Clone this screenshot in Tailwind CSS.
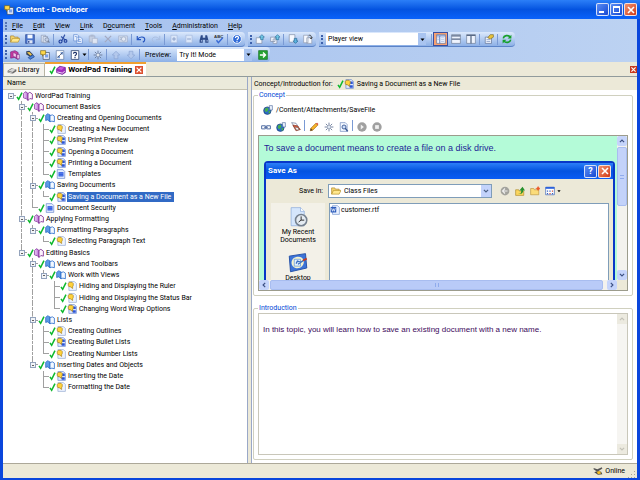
<!DOCTYPE html>
<html lang="en">
<head>
  <meta charset="UTF-8" />
  <meta name="viewport" content="width=device-width, initial-scale=1.0" />
  <title>Content - Developer</title>
  <script src="https://cdn.jsdelivr.net/npm/@tailwindcss/browser@4"></script>
</head>
<body class="h-screen overflow-hidden flex flex-col bg-[#0a46dc] font-[Roboto,'Liberation_Sans',sans-serif] text-[7px] leading-[10px] text-black">

  <!-- Icon sprite -->
  <svg class="hidden">
    <symbol id="app" viewBox="0 0 16 16"><path d="M5 4h10v11H5z" fill="#e8eefc" stroke="#345"/><path d="M8 7h5v5H8z" fill="#7aa0e8"/><path d="M1 1h8v6H6l-2 3V7H1z" fill="#ffd84a" stroke="#7a6412"/></symbol>
    <symbol id="check" viewBox="0 0 8 12"><path d="M1 7l2 3 4-8" fill="none" stroke="#0db82c" stroke-width="1.800"/></symbol>
    <symbol id="module" viewBox="0 0 16 16"><path d="M1 4l3-3 4 3v11l-3-3-4-1z" fill="#c88ae0" stroke="#7d2a93" stroke-width="1.200"/><path d="M8 4l3-2 4 3v8l-4-1-3 3z" fill="#fdf2fd" stroke="#7d2a93" stroke-width="1.300"/><path d="M3 3v8" stroke="#f6e0fa" stroke-width="1.500"/></symbol>
    <symbol id="section" viewBox="0 0 16 16"><path d="M1 4l3-3 4 2v11l-4-3-3 1z" fill="#5c9ae6" stroke="#1b5cb8"/><path d="M8 4l4-1 3 2v9l-4-1-3 1z" fill="#f4f9ff" stroke="#2a6ccc" stroke-width="1.3"/></symbol>
    <symbol id="topic" viewBox="0 0 16 16"><path d="M3 1h9l3 3v11H3z" fill="#eef4ff" stroke="#8aa2cc"/><path d="M2 4l2-2h4l2 2v3L9 9v3L5 9H3L2 7z" fill="#ffd23c" stroke="#a07810"/></symbol>
    <symbol id="topicsim" viewBox="0 0 16 16"><path d="M3 1h9l3 3v11H3z" fill="#dfe9ff" stroke="#5a7cc8"/><path d="M10 4h4v4h-4zM9 10h5v4H9z" fill="#2b55d8"/><path d="M2 4l2-2h4l2 2v3L9 9v3L5 9H3L2 7z" fill="#ffd23c" stroke="#8a6a18"/></symbol>
    <symbol id="page" viewBox="0 0 16 16"><path d="M2 1h9l3 3v11H2z" fill="#e4edff" stroke="#5a7cc8"/><path d="M4 5h8v7H4z" fill="#2f5be0"/><path d="M4 7h8M4 10h8" stroke="#86a4f4" stroke-width=".7"/></symbol>
    <symbol id="open" viewBox="0 0 16 16"><path d="M1 13V3h5l1 2h6v3" fill="#f7d873" stroke="#a87c18"/><path d="M1 13l3-6h12l-3 6z" fill="#ffe88e" stroke="#b08a20"/></symbol>
    <symbol id="save" viewBox="0 0 16 16"><path d="M1 1h14v14H1z" fill="#4a74cc" stroke="#243f8c"/><path d="M4 1h8v6H4z" fill="#f4f8ff"/><path d="M4 10h8v5H4z" fill="#dfe6f4"/><path d="M5 11h2v3H5z" fill="#243f8c"/></symbol>
    <symbol id="publish" viewBox="0 0 16 16"><path d="M2 2h7v11H2z" fill="#e5ecf8" stroke="#8592ae"/><path d="M5 4h7v10H5z" fill="#d4deef" stroke="#8592ae"/><circle cx="11" cy="9" r="3" fill="#c2cfe6" stroke="#74809a"/><path d="M13 11l2 3" stroke="#74809a" stroke-width="2"/></symbol>
    <symbol id="cut" viewBox="0 0 16 16"><path d="M11 1L6 11M5 4l7 6" stroke="#3554a8" stroke-width="1.8"/><circle cx="4" cy="12" r="2.4" fill="none" stroke="#1f3f9c" stroke-width="1.8"/><circle cx="12" cy="11" r="2.2" fill="none" stroke="#1f3f9c" stroke-width="1.8"/></symbol>
    <symbol id="copy" viewBox="0 0 16 16"><path d="M1 1h6l2 2v8H1zM6 5h6l3 3v7H6z" fill="#e9f1ff" stroke="#5a86d0"/><path d="M8 9h4M8 12h5M3 4h3" stroke="#5a86d0"/></symbol>
    <symbol id="paste" viewBox="0 0 16 16"><path d="M2 3h9v10H2z" fill="#c5cfe2" stroke="#9ba8c4"/><path d="M4 1h5v3H4z" fill="#adb9d0"/><path d="M7 7h8v8H7z" fill="#dfe6f3" stroke="#a5b1ca"/></symbol>
    <symbol id="delete" viewBox="0 0 16 16"><path d="M3 3l10 10M13 3L3 13" stroke="#a3a9c2" stroke-width="2"/></symbol>
    <symbol id="props" viewBox="0 0 16 16"><path d="M1 3h14v10H1z" fill="#d3dded" stroke="#9eadc8"/><circle cx="9" cy="8" r="3.5" fill="#e4eaf5" stroke="#91a1be"/><path d="M3 6h3M3 9h2" stroke="#91a1be"/></symbol>
    <symbol id="undo" viewBox="0 0 16 16"><path d="M2 3v6h6" fill="none" stroke="#2454c0" stroke-width="1.8"/><path d="M2 9c4-6 12-5 12 0 0 2-1 3-3 4" fill="none" stroke="#2454c0" stroke-width="1.8"/></symbol>
    <symbol id="redo" viewBox="0 0 16 16"><path d="M14 3v6H8M14 9C10 3 2 4 2 9c0 2 1 3 3 4" fill="none" stroke="#a9bcdf" stroke-width="1.5"/></symbol>
    <symbol id="plus" viewBox="0 0 16 16"><path d="M3 2h10v12H3z" fill="#dae6f9" stroke="#a2b6da"/><path d="M5 8h6M8 5v6" stroke="#8398c2" stroke-width="1.4"/></symbol>
    <symbol id="minus" viewBox="0 0 16 16"><path d="M3 2h10v12H3z" fill="#dae6f9" stroke="#a2b6da"/><path d="M5 8h6" stroke="#8398c2" stroke-width="1.4"/></symbol>
    <symbol id="find" viewBox="0 0 16 16"><path d="M3 2h3v4h4V2h3l2 8v4h-5v-5H6v5H1v-4z" fill="#2e4b88"/><path d="M3 10h2v2H3zM12 10h2v2h-2z" fill="#b6c8ec"/></symbol>
    <symbol id="spell" viewBox="0 0 16 16"><text x="0" y="6" font-size="7" font-weight="bold" fill="#333" font-family="Liberation Sans">ABC</text><path d="M4 10l3 4 7-8" fill="none" stroke="#3668d4" stroke-width="2.2"/></symbol>
    <symbol id="help" viewBox="0 0 16 16"><circle cx="8" cy="8" r="7" fill="#2f6ad8" stroke="#e4edfb" stroke-width="1.6"/><path d="M5.500 6.500c0-4 5-3 5-.5 0 2-2.500 2-2.500 4M8 11v2" fill="none" stroke="#fff" stroke-width="1.8"/></symbol>
    <symbol id="checkin" viewBox="0 0 16 16"><path d="M2 6h9v9H2z" fill="#f6f9ff" stroke="#7a869e"/><path d="M11 1l4 4h-2v4H9V5H7z" fill="#6fc6e4" stroke="#256a94"/></symbol>
    <symbol id="checkinall" viewBox="0 0 16 16"><path d="M1 5h7v7H1zM5 8h6v7H5z" fill="#f0f5ff" stroke="#7a869e"/><path d="M12 1l4 4h-2v4h-4V5H8z" fill="#6fc6e4" stroke="#256a94"/></symbol>
    <symbol id="checkout" viewBox="0 0 16 16"><path d="M2 1h9v12H2z" fill="#f6f9ff" stroke="#7a869e"/><path d="M12 15l-4-4h2V7h4v4h2z" fill="#5cb4e0" stroke="#20628e"/></symbol>
    <symbol id="cancelout" viewBox="0 0 16 16"><path d="M1 2h7v12H1zM6 6h8v9H6z" fill="#f6f9ff" stroke="#8a94a8"/><path d="M9 2c4-1 5 2 4 5M11 6l2 2 2-3" fill="none" stroke="#3a3a3a" stroke-width="1.3"/></symbol>
    <symbol id="v1" viewBox="0 0 16 16"><path d="M1 1h14v14H1z" fill="#f0f5ff" stroke="#5b6f97"/><path d="M1 3h14M6 3v12" stroke="#5b7cc0" stroke-width="1.5"/><path d="M2 6h3M2 9h3M8 6h5M8 9h5M8 12h5" stroke="#9db4e0"/></symbol>
    <symbol id="v2" viewBox="0 0 16 16"><path d="M1 1h14v14H1z" fill="#eef3fd" stroke="#67768f"/><path d="M1 3h14M1 8h14" stroke="#596a86" stroke-width="2"/></symbol>
    <symbol id="v3" viewBox="0 0 16 16"><path d="M1 1h14v14H1z" fill="#eef3fd" stroke="#67768f"/><path d="M1 2h14M8 2v13" stroke="#596a86" stroke-width="2"/></symbol>
    <symbol id="hand" viewBox="0 0 16 16"><path d="M2 5h10v10H2z" fill="#eef3fd" stroke="#56678a"/><path d="M4 9h6M4 12h6" stroke="#6d83b5"/><path d="M6 6l4-5h5v4l-5 3z" fill="#e8c23c" stroke="#7a6820"/></symbol>
    <symbol id="refresh" viewBox="0 0 16 16"><path d="M2 7c1-5 8-6 11-2M14 9c-1 5-8 6-11 2" fill="none" stroke="#17a02c" stroke-width="2.6"/><path d="M15 1v6H9zM1 15V9h6z" fill="#17a02c"/></symbol>
    <symbol id="newmod" viewBox="0 0 16 16"><path d="M1 3l7-2 5 3v11l-6-3-6 1z" fill="#c93aa0" stroke="#6f1a78"/><path d="M5 4l5 2v6l-5-2zM11 7h4v7h-4z" fill="#f4c5ea" stroke="#6f1a78" stroke-width=".8"/></symbol>
    <symbol id="purplebook" viewBox="0 0 16 16"><path d="M1 6l5-4 9 2v8l-5 3-9-3z" fill="#a32cc0" stroke="#5c1480"/><path d="M3 6l4-3 6 1-4 4z" fill="#c95ae0"/><path d="M2 11l8 2 4-3" fill="none" stroke="#fff" stroke-width="1.300"/></symbol>
    <symbol id="newsec" viewBox="0 0 16 16"><path d="M2 2l5-1 6 6-4 4-7-4z" fill="#33435e"/><path d="M3 4l4-1 4 4-2 2z" fill="#f3c84a"/><path d="M5 12l8-4 2 3-7 4z" fill="#4a83dc" stroke="#1d3d7c"/></symbol>
    <symbol id="newpage" viewBox="0 0 16 16"><path d="M2 1h12v14H2z" fill="#fff" stroke="#55709c"/><path d="M9 3h4v4H9zM4 9h4v4H4z" fill="#7aa0dc"/><path d="M4 12l8-8" stroke="#445" stroke-width="1.2"/></symbol>
    <symbol id="question" viewBox="0 0 16 16"><path d="M2 1h12v14H2z" fill="#fff" stroke="#3d517c" stroke-width="1.4"/><path d="M5.500 6c0-3 5-3 5 0 0 2-2.500 2-2.500 4M8 11v2" fill="none" stroke="#1b2f68" stroke-width="1.8"/></symbol>
    <symbol id="burst" viewBox="0 0 16 16"><path d="M8 1v4M8 11v4M1 8h4M11 8h4M3 3l3 3M10 10l3 3M13 3l-3 3M6 10l-3 3" stroke="#6d7d9b" stroke-width="1.5"/><circle cx="8" cy="8" r="2.500" fill="#eef3fb" stroke="#7f8da8"/></symbol>
    <symbol id="up" viewBox="0 0 16 16"><path d="M8 2l6 6h-3v6H5V8H2z" fill="#b3c8ec" stroke="#86a0d0"/></symbol>
    <symbol id="down" viewBox="0 0 16 16"><path d="M8 14l6-6h-3V2H5v6H2z" fill="#b3c8ec" stroke="#86a0d0"/></symbol>
    <symbol id="go" viewBox="0 0 16 16"><path d="M1 1h14v14H1z" fill="#26a232" stroke="#0f6c1c"/><path d="M3 8h8M8 4l4 4-4 4" fill="none" stroke="#fff" stroke-width="2.2"/></symbol>
    <symbol id="library" viewBox="0 0 16 16"><path d="M1 9l6-4 8 2v3l-6 4-8-2z" fill="#6c6c6c"/><path d="M2 9l6-3 6 1-5 4z" fill="#d8d8d8"/><path d="M2 11l7 2" stroke="#fff"/></symbol>
    <symbol id="globe" viewBox="0 0 16 16"><circle cx="7" cy="9" r="6" fill="#2d6cc8" stroke="#16386e"/><path d="M3 6l4-2 2 3-3 4-3-1zM9 10l3-1-1 4-2 1z" fill="#49b04c"/><path d="M10 1h5v7h-4z" fill="#eef4ff" stroke="#4b689c"/></symbol>
    <symbol id="link" viewBox="0 0 16 16"><path d="M1 6h6v5H1zM9 6h6v5H9z" fill="none" stroke="#5570a4" stroke-width="1.6"/><path d="M5 8.500h6" stroke="#5570a4" stroke-width="1.5"/></symbol>
    <symbol id="unlink" viewBox="0 0 16 16"><path d="M1 1l7 1 4 6-6 1z" fill="#fff" stroke="#55678a"/><path d="M3 5l7 1 5 6-7 2z" fill="#e05a38" stroke="#7c2a18"/><path d="M6 8l5 1 2 3-4 1z" fill="#f6f6f6" stroke="#555" stroke-width=".800"/></symbol>
    <symbol id="pencil" viewBox="0 0 16 16"><path d="M2 14l1-4 8-8 3 3-8 8z" fill="#f7b52a" stroke="#9c5f10"/><path d="M2 14l1-4 3 3z" fill="#543"/><path d="M11 2l3 3 1-2-2-2z" fill="#d8503c"/></symbol>
    <symbol id="preview" viewBox="0 0 16 16"><path d="M2 1h8l3 3v11H2z" fill="#f4f8ff" stroke="#6480b8"/><circle cx="8" cy="8" r="3.200" fill="#cfe0fa" stroke="#345490" stroke-width="1.4"/><path d="M10 10l4 5" stroke="#345490" stroke-width="2.200"/></symbol>
    <symbol id="play" viewBox="0 0 16 16"><circle cx="8" cy="8" r="7.500" fill="#a0a0a0"/><path d="M6 4l5 4-5 4z" fill="#f0f0f0"/></symbol>
    <symbol id="stop" viewBox="0 0 16 16"><circle cx="8" cy="8" r="7.500" fill="#a0a0a0"/><path d="M5 5h6v6H5z" fill="#f0f0f0"/></symbol>
    <symbol id="back" viewBox="0 0 16 16"><circle cx="8" cy="8" r="7" fill="#a3a39d"/><path d="M12 8H5M8 4L4 8l4 4" fill="none" stroke="#eee" stroke-width="1.8"/></symbol>
    <symbol id="upfolder" viewBox="0 0 16 16"><path d="M1 6h5l1 2h7v7H1z" fill="#fbd65e" stroke="#a8862a"/><path d="M5 12c5 0 5-2 5-5H7l5-6 4 6h-3c0 5-3 6-8 5z" fill="#25902c"/></symbol>
    <symbol id="newfolder" viewBox="0 0 16 16"><path d="M1 4h5l1 2h7v8H1z" fill="#fbdc7a" stroke="#b8923a"/><circle cx="13" cy="4" r="2.500" fill="#ec5a2c"/><path d="M13 0v8M9 4h7" stroke="#ec5a2c"/></symbol>
    <symbol id="listview" viewBox="0 0 16 16"><path d="M1 2h14v12H1z" fill="#fff" stroke="#2c58b4"/><path d="M1 3h14" stroke="#2c62dc" stroke-width="3"/><path d="M3 7h2v2H3zM7 7h2v2H7zM3 11h2v2H3zM11 11h2v2h-2z" fill="#3a65c0"/><path d="M11 7h2v2h-2zM7 11h2v2H7z" fill="#d0503c"/></symbol>
    <symbol id="recent" viewBox="0 0 32 32"><path d="M5 1h15l6 6v23H5z" fill="#d5e6fc" stroke="#7ea2d8"/><path d="M20 1v6h6" fill="#fff" stroke="#7ea2d8"/><circle cx="21" cy="21" r="9" fill="#e4ebf2" stroke="#75818f" stroke-width="2.500"/><path d="M21 15v6h5M21 21l-4 3" fill="none" stroke="#333" stroke-width="1.6"/></symbol>
    <symbol id="desk" viewBox="0 0 32 32"><path d="M2 5l26-4 2 23-26 6z" fill="#3c74d8" stroke="#2350a8" stroke-width="1.5"/><path d="M8 9c6-5 16-4 17 3 2 8-6 14-13 12-7-3-8-10-4-15z" fill="#f4f3cf"/><path d="M10 10h10v11H10z" fill="#e3f1fe" stroke="#4c86d4"/><path d="M13 17l2-4 6 2M16 18l10-7" fill="none" stroke="#386fc0" stroke-width="2"/><path d="M24 12l6-3" stroke="#c33a22" stroke-width="3"/></symbol>
    <symbol id="word" viewBox="0 0 16 16"><path d="M4 1h8l3 3v11H4z" fill="#eaf1ff" stroke="#6b8dca"/><path d="M1 3h9v9H1z" fill="#2c5cbc"/><path d="M2.500 5l1.500 5 1.500-4L7 10l1.500-5" fill="none" stroke="#fff" stroke-width="1.100"/></symbol>
    <symbol id="online" viewBox="0 0 16 16"><path d="M1 3l6 2 7-3 1 2-6 4H5L1 5z" fill="#555"/><path d="M2 10l5-2 6 1 2 4-7 1z" fill="#4a4a4a"/><path d="M6 9l5-1 2 4-5 1z" fill="#f4bd22"/></symbol>
    <symbol id="x" viewBox="0 0 10 10"><path d="M2 2l6 6M8 2L2 8" stroke="currentColor" stroke-width="1.600"/></symbol>
    <symbol id="caret" viewBox="0 0 10 10"><path d="M1 3h8L5 8z" fill="currentColor"/></symbol>
    <symbol id="chev" viewBox="0 0 10 10"><path d="M1.500 3L5 6.500 8.500 3" fill="none" stroke="currentColor" stroke-width="2"/></symbol>
  </svg>

  <!-- Title bar -->
  <header class="h-[19px] shrink-0 flex items-center pl-1 pr-[3px] bg-linear-to-b from-[#2b7ff8] via-[#0453e0] to-[#0a62fb] text-white">
    <svg class="size-[10px]"><use href="#app"/></svg>
    <h1 class="ml-0.5 flex-1 font-bold text-[8px]">Content - Developer</h1>
    <div class="flex gap-px">
      <button aria-label="Minimize" class="size-[13px] rounded-xs border border-white/80 bg-linear-to-br from-[#5a8cf4] to-[#1746d2] flex items-end p-0.5"><span class="w-[5px] h-0.5 bg-white"></span></button>
      <button aria-label="Maximize" class="size-[13px] rounded-xs border border-white/80 bg-linear-to-br from-[#5a8cf4] to-[#1746d2] flex items-center justify-center"><span class="size-[7px] border border-t-2 border-white"></span></button>
      <button aria-label="Close" class="size-[13px] rounded-xs border border-white/80 bg-linear-to-br from-[#f0906c] to-[#cf3612] flex items-center justify-center"><svg class="size-[10px]"><use href="#x"/></svg></button>
    </div>
  </header>

  <div class="flex-1 min-h-0 mx-[3px] mb-0.5 flex flex-col bg-[#ece9d8]">
    <!-- Menu and toolbars -->
    <div class="shrink-0 bg-linear-to-r from-[#a4c0ee] to-[#bcd2f2]">
      <nav class="h-[13px] flex items-center gap-[10px] pl-0.5">
        <span class="h-2 border-l-2 border-dotted border-[#5474b4] -mr-[5px]"></span>
        <button><u>F</u>ile</button>
        <button><u>E</u>dit</button>
        <button><u>V</u>iew</button>
        <button><u>L</u>ink</button>
        <button>D<u>o</u>cument</button>
        <button><u>T</u>ools</button>
        <button><u>A</u>dministration</button>
        <button><u>H</u>elp</button>
      </nav>

      <div class="h-[15px] flex gap-[3px]">
        <div data-bar="open save publish | cut copy paste delete props | undo redo | plus minus find spell | help" class="flex items-center rounded-r-sm border-b border-[#5b83c8] bg-linear-to-b from-[#dce9fc] to-[#8db0e6] pl-0.5 pr-px">
          <span class="h-[9px] border-l-2 border-dotted border-[#3d61ac]"></span>
        </div>
        <div data-bar="checkin checkinall | checkout cancelout" class="flex items-center rounded-r-sm border-b border-[#5b83c8] bg-linear-to-b from-[#dce9fc] to-[#8db0e6] pl-0.5 pr-px">
          <span class="h-[9px] border-l-2 border-dotted border-[#3d61ac]"></span>
        </div>
        <div data-bar="| v1 v2 v3 | hand | refresh" class="flex items-center rounded-r-sm border-b border-[#5b83c8] bg-linear-to-b from-[#dce9fc] to-[#8db0e6] pl-0.5 pr-px">
          <span class="h-[9px] border-l-2 border-dotted border-[#3d61ac] mr-[3px]"></span>
          <div class="relative w-[100px] mr-1">
            <select aria-label="View" class="block w-full h-3 pl-0.5 bg-white appearance-none"><option>Player view</option></select>
            <span class="absolute right-0 inset-y-0 w-2 bg-[#a9c4f0] flex items-center justify-center pointer-events-none"><svg class="size-[5px]"><use href="#caret"/></svg></span>
          </div>
        </div>
      </div>

      <div class="h-[15px] flex">
        <div class="flex items-center rounded-r-sm bg-linear-to-b from-[#dce9fc] to-[#8db0e6] pl-0.5">
          <span class="h-[9px] border-l-2 border-dotted border-[#3d61ac]"></span>
          <div data-bar="newmod newsec app newpage question" class="flex items-center"></div>
          <svg class="size-[5px]"><use href="#caret"/></svg>
          <div data-bar="| burst | up down |" class="flex items-center"></div>
          <label for="preview" class="ml-1 mr-[6px]">Preview:</label>
          <div class="relative w-[75px] mr-[3px]">
            <select id="preview" class="block w-full h-3 pl-0.5 bg-white appearance-none"><option>Try It! Mode</option></select>
            <span class="absolute right-0 inset-y-0 w-2 bg-[#a9c4f0] flex items-center justify-center pointer-events-none"><svg class="size-[5px]"><use href="#caret"/></svg></span>
          </div>
          <div data-bar="go" class="flex"></div>
        </div>
      </div>
    </div>

    <!-- Document tabs -->
    <div class="h-[15px] shrink-0 flex items-end border-b border-[#919b9c]">
      <button class="h-[13px] flex items-center gap-px border border-b-0 border-[#b8b5a4] bg-[#f4f3ee] pl-[3px] pr-[5px]"><svg class="size-[10px]"><use href="#library"/></svg>Library</button>
      <div class="h-[14px] flex items-center border-t-2 border-[#f0a030] bg-white pl-1 pr-[3px]">
        <svg class="w-[7px] h-[10px]"><use href="#check"/></svg>
        <svg class="size-[10px]"><use href="#purplebook"/></svg>
        <a href="#" class="ml-0.5 mr-[3px] text-[8px] font-bold">WordPad Training</a>
        <button aria-label="Close tab" class="size-2 bg-[#dc5030] text-white"><svg class="size-2"><use href="#x"/></svg></button>
      </div>
      <button aria-label="Close document" class="ml-auto mb-[3px] size-[7px] bg-[#c8381c] text-white"><svg class="size-[7px]"><use href="#x"/></svg></button>
    </div>

    <div class="flex-1 min-h-0 flex">
      <!-- Outline -->
      <aside class="w-[245px] shrink-0 flex flex-col bg-white border-r border-[#9aa8c8]">
        <div class="h-[13px] shrink-0 flex items-center pl-1 bg-[#ebeadb] border-b border-[#c5c2b0]">Name</div>
        <div id="tree" class="h-[303px] grid auto-rows-fr pl-0.5 whitespace-nowrap"></div>
      </aside>

      <main class="ml-[3px] flex-1 min-w-0 flex flex-col bg-white border-l border-[#9aa8c8]">
        <div class="h-[13px] shrink-0 flex items-center pl-0.5 bg-[#ece9d8]">
          <span class="mr-1">Concept/Introduction for:</span>
          <svg class="w-[7px] h-[10px]"><use href="#check"/></svg>
          <svg class="size-[10px] mr-[3px]"><use href="#topicsim"/></svg>
          <span>Saving a Document as a New File</span>
        </div>

        <div class="flex-1 min-h-0 flex flex-col gap-[7px] pl-px pr-1 pb-[3px]">
          <fieldset class="min-w-0 rounded-xs border border-[#d0d0bf] px-1 pb-1">
            <legend class="px-px text-[#0046d5]">Concept</legend>
            <div class="h-5 flex items-center gap-[3px] pl-[5px]"><svg class="size-[10px]"><use href="#globe"/></svg>/Content/Attachments/SaveFile</div>
            <div data-bar="link globe unlink | pencil burst preview | play stop" class="h-[15px] flex items-start"></div>

            <div class="h-[156px] flex flex-col border border-[#9c9c8c]">
              <div class="flex-1 min-h-0 flex">
                <div class="flex-1 min-w-0 overflow-hidden bg-[#b4fbd8] px-[5px]">
                  <p class="py-[7px] font-['Liberation_Sans',Arial,sans-serif] text-[9px] leading-[11px] text-[#1c1c96]">To save a document means to create a file on a disk drive.</p>
                  <!-- Save As dialog -->
                  <section class="mr-[-3px] rounded-t-sm border-2 border-b-0 border-[#0838c8] bg-[#ece9d8]">
                    <div class="h-4 flex items-center gap-px px-0.5 bg-linear-to-b from-[#2b7ff8] via-[#0453e0] to-[#0a5cf4] text-white">
                      <h2 class="flex-1 text-[8px] font-bold">Save As</h2>
                      <button aria-label="Help" class="size-[13px] rounded-xs border border-white/80 bg-linear-to-br from-[#5a8cf4] to-[#1746d2] flex items-center justify-center text-[9px] font-bold">?</button>
                      <button aria-label="Close dialog" class="size-[13px] rounded-xs border border-white/80 bg-linear-to-br from-[#f0906c] to-[#cf3612] flex items-center justify-center"><svg class="size-[10px]"><use href="#x"/></svg></button>
                    </div>
                    <div class="h-6 flex items-center">
                      <label for="savein" class="w-[57px] text-right">Save in:</label>
                      <div class="relative ml-[5px] w-[164px]">
                        <select id="savein" class="block w-full h-[14px] pl-[15px] bg-white border border-[#7f9db9] appearance-none"><option>Class Files</option></select>
                        <svg class="absolute left-[3px] top-0.5 size-[10px] pointer-events-none"><use href="#open"/></svg>
                        <span class="absolute right-px inset-y-px w-[10px] bg-[#c3d3fb] text-[#4d6185] flex items-center justify-center pointer-events-none"><svg class="size-[6px]"><use href="#chev"/></svg></span>
                      </div>
                      <div data-bar="back upfolder newfolder listview" class="ml-[5px] flex items-center"></div>
                      <svg class="size-1"><use href="#caret"/></svg>
                    </div>
                    <div class="flex h-[102px] pr-1">
                      <div class="w-[54px] ml-[5px] mr-1 pt-1 flex flex-col items-center gap-[9px] bg-[#f3f1e8] text-center leading-2">
                        <button class="w-full flex flex-col items-center gap-px px-1"><svg class="size-5"><use href="#recent"/></svg>My Recent Documents</button>
                        <button class="w-full flex flex-col items-center gap-px"><svg class="size-5"><use href="#desk"/></svg>Desktop</button>
                      </div>
                      <div class="flex-1 border border-[#7f9db9] bg-white">
                        <div class="h-3 flex items-center gap-px"><svg class="size-[10px]"><use href="#word"/></svg>customer.rtf</div>
                      </div>
                    </div>
                  </section>
                </div>
                <div class="w-[10px] shrink-0 flex flex-col bg-[#f3f2ee] text-[#3d5185]">
                  <button aria-label="Scroll up" class="h-[10px] rounded-xs bg-[#c5d4fb] flex items-center justify-center"><svg class="size-[6px] rotate-180"><use href="#chev"/></svg></button>
                  <div class="h-[59px] mt-px rounded-xs border border-[#a8bdf0] bg-[#c3d2fa] flex items-center justify-center"><span class="w-1 h-1 border-y border-[#8fabec]"></span></div>
                  <button aria-label="Scroll down" class="mt-auto h-[10px] rounded-xs bg-[#c5d4fb] flex items-center justify-center"><svg class="size-[6px]"><use href="#chev"/></svg></button>
                </div>
              </div>
              <div class="h-[10px] shrink-0 flex bg-[#f3f2ee] text-[#3d5185]">
                <button aria-label="Scroll left" class="w-[10px] rounded-xs bg-[#c5d4fb] flex items-center justify-center"><svg class="size-[6px] rotate-90"><use href="#chev"/></svg></button>
                <div class="flex-1 mx-px mr-1 rounded-xs border border-[#a8bdf0] bg-[#b9cbf8] flex items-center justify-center"><span class="w-1 h-1 border-x border-[#8fabec]"></span></div>
                <button aria-label="Scroll right" class="w-[10px] rounded-xs bg-[#c5d4fb] flex items-center justify-center"><svg class="size-[6px] -rotate-90"><use href="#chev"/></svg></button>
                <span class="w-[10px] bg-[#ece9d8]"></span>
              </div>
            </div>
          </fieldset>

          <fieldset class="flex-1 min-h-0 min-w-0 rounded-xs border border-[#d0d0bf] px-1 pb-1">
            <legend class="px-px text-[#0046d5]">Introduction</legend>
            <div class="h-full flex border border-[#c9c7ba]">
              <p class="flex-1 pl-1 pt-[10px] font-['Liberation_Sans',Arial,sans-serif] text-[8px] leading-[11px] text-[#3c0a5c]">In this topic, you will learn how to save an existing document with a new name.</p>
              <div class="w-[10px] flex flex-col justify-between bg-[#f6f5f2] text-[#c4c2b8]">
                <button aria-label="Scroll up" disabled class="h-[10px] bg-[#eceae0] flex items-center justify-center"><svg class="size-[6px] rotate-180"><use href="#chev"/></svg></button>
                <button aria-label="Scroll down" disabled class="h-[10px] bg-[#eceae0] flex items-center justify-center"><svg class="size-[6px]"><use href="#chev"/></svg></button>
              </div>
            </div>
          </fieldset>
        </div>
      </main>
    </div>

    <!-- Status bar -->
    <footer class="h-[15px] shrink-0 flex items-center justify-end gap-0.5 border-t border-[#aca899] pr-px">
      <svg class="size-[10px]"><use href="#online"/></svg>
      <span>Online</span>
      <svg class="size-2 ml-px self-end" viewBox="0 0 8 8"><path d="M6 1h1v1H6zM6 4h1v1H6zM3 4h1v1H3zM6 7h1v1H6zM3 7h1v1H3zM0 7h1v1H0z" fill="#a8a594"/></svg>
    </footer>
  </div>

  <script>
    // Fill every toolbar from its list of icon names
    document.querySelectorAll('[data-bar]').forEach((bar) => {
      bar.dataset.bar.split(' ').forEach((name) => {
        if (name === '|') {
          bar.insertAdjacentHTML('beforeend', '<span class="w-px h-[11px] mx-px bg-[#7a9ad4]"></span>');
          return;
        }
        const active = name === 'v1' ? 'bg-[#f8a070] outline outline-[#3c50a0] -outline-offset-1' : '';
        bar.insertAdjacentHTML('beforeend',
          `<button aria-label="${name}" class="w-[15px] h-[14px] flex items-center justify-center ${active}"><svg class="size-[10px]"><use href="#${name}"/></svg></button>`);
      });
    });

    // [level, icon, title]
    const nodes = [
      [0, 'module', 'WordPad Training'],
      [1, 'module', 'Document Basics'],
      [2, 'section', 'Creating and Opening Documents'],
      [3, 'topic', 'Creating a New Document'],
      [3, 'topicsim', 'Using Print Preview'],
      [3, 'topicsim', 'Opening a Document'],
      [3, 'topicsim', 'Printing a Document'],
      [3, 'page', 'Templates'],
      [2, 'section', 'Saving Documents'],
      [3, 'topicsim', 'Saving a Document as a New File'],
      [2, 'page', 'Document Security'],
      [1, 'module', 'Applying Formatting'],
      [2, 'section', 'Formatting Paragraphs'],
      [3, 'topic', 'Selecting Paragraph Text'],
      [1, 'module', 'Editing Basics'],
      [2, 'section', 'Views and Toolbars'],
      [3, 'section', 'Work with Views'],
      [4, 'topic', 'Hiding and Displaying the Ruler'],
      [4, 'topic', 'Hiding and Displaying the Status Bar'],
      [4, 'topicsim', 'Changing Word Wrap Options'],
      [2, 'section', 'Lists'],
      [3, 'topic', 'Creating Outlines'],
      [3, 'topicsim', 'Creating Bullet Lists'],
      [3, 'topic', 'Creating Number Lists'],
      [2, 'section', 'Inserting Dates and Objects'],
      [3, 'topicsim', 'Inserting the Date'],
      [3, 'topic', 'Formatting the Date'],
    ];

    // true if a later sibling exists at this level
    function continues(i, level) {
      for (let j = i + 1; j < nodes.length; j++) {
        if (nodes[j][0] < level) return false;
        if (nodes[j][0] === level) return true;
      }
      return false;
    }

    document.getElementById('tree').innerHTML = nodes.map(([level, icon, title], i) => {
      let guides = '';
      for (let l = 0; l < level; l++) {
        guides += `<span class="w-[11px] h-full pl-[5px]">${continues(i, l) ? '<span class="block h-full border-l border-dashed border-[#a0a0a0]"></span>' : ''}</span>`;
      }
      const top = level ? 'border-l' : '';
      const bottom = continues(i, level) ? 'border-l' : '';
      const parent = nodes[i + 1] && nodes[i + 1][0] > level;
      const box = parent
        ? '<button aria-label="Collapse" class="absolute left-[3px] top-[3px] size-[6px] border border-[#93a3bc] bg-[#f2f4f8] flex items-center justify-center"><span class="w-0.5 h-px bg-[#606060]"></span></button>' : '';
      const selected = title === 'Saving a Document as a New File' ? 'bg-[#316ac5] text-white pr-[3px]' : '';
      return `<div class="flex items-center min-h-0">${guides}
        <span class="relative w-[11px] h-full pl-[5px] flex flex-col">
          <span class="flex-1 border-b ${top} border-dashed border-[#a0a0a0]"></span>
          <span class="flex-1 ${bottom} border-dashed border-[#a0a0a0]"></span>${box}
        </span>
        <svg class="w-[7px] h-[10px] shrink-0"><use href="#check"/></svg>
        <svg class="size-[10px] shrink-0"><use href="#${icon}"/></svg>
        <a href="#" class="ml-px px-px ${selected}">${title}</a>
      </div>`;
    }).join('');
  </script>
</body>
</html>
